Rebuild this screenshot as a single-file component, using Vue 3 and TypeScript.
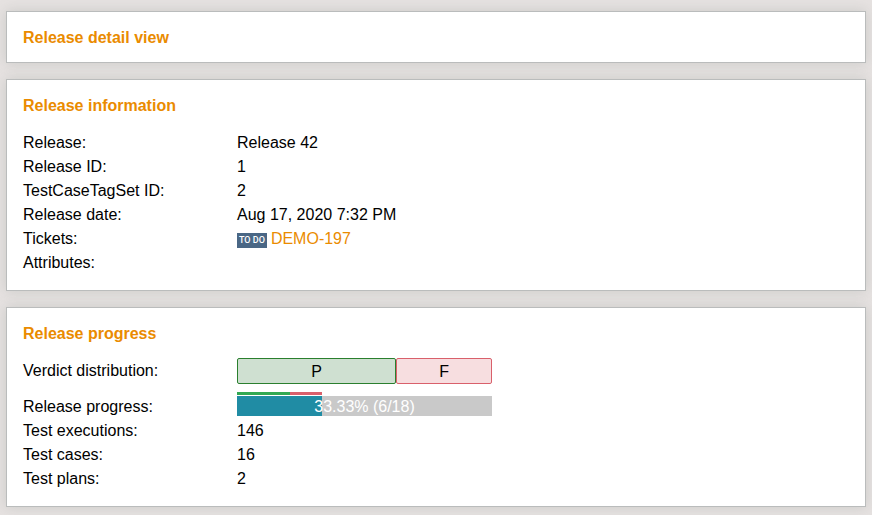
<script setup lang="ts">
interface Verdict {
  key: string
  label: string
  count: number
}

interface Field {
  label: string
  value: string | number
}

const releaseFields: Field[] = [
  { label: 'Release:', value: 'Release 42' },
  { label: 'Release ID:', value: 1 },
  { label: 'TestCaseTagSet ID:', value: 2 },
  { label: 'Release date:', value: 'Aug 17, 2020 7:32 PM' },
]

const ticket = { id: 'DEMO-197', status: 'TO DO' }

const verdicts: Verdict[] = [
  { key: 'pass', label: 'P', count: 10 },
  { key: 'fail', label: 'F', count: 6 },
]

const totals: Field[] = [
  { label: 'Test executions:', value: 146 },
  { label: 'Test cases:', value: 16 },
  { label: 'Test plans:', value: 2 },
]

const done = 6
const planned = 18
const percent = ((done / planned) * 100).toFixed(2)

const verdictTotal = verdicts.reduce((sum, v) => sum + v.count, 0)
const share = (v: Verdict): string => `${(v.count / verdictTotal) * 100}%`
</script>

<template>
  <main class="page">
    <header class="card">
      <h1 class="title">Release detail view</h1>
    </header>

    <section class="card">
      <h2 class="title">Release information</h2>
      <dl class="fields">
        <div v-for="field in releaseFields" :key="field.label" class="row">
          <dt>{{ field.label }}</dt>
          <dd>{{ field.value }}</dd>
        </div>
        <div class="row">
          <dt>Tickets:</dt>
          <dd class="ticket">
            <span class="status">{{ ticket.status }}</span>
            <a href="#" class="link">{{ ticket.id }}</a>
          </dd>
        </div>
        <div class="row">
          <dt>Attributes:</dt>
          <dd></dd>
        </div>
      </dl>
    </section>

    <section class="card">
      <h2 class="title">Release progress</h2>
      <dl class="fields">
        <div class="row row-verdicts">
          <dt>Verdict distribution:</dt>
          <dd>
            <div class="verdicts">
              <div
                v-for="v in verdicts"
                :key="v.key"
                class="verdict"
                :class="v.key"
                :style="{ width: share(v) }"
              >{{ v.label }}</div>
            </div>
          </dd>
        </div>
        <div class="row row-progress">
          <dt>Release progress:</dt>
          <dd>
            <div class="progress">
              <div class="split" :style="{ width: percent + '%' }">
                <div
                  v-for="v in verdicts"
                  :key="v.key"
                  class="part"
                  :class="v.key"
                  :style="{ width: share(v) }"
                ></div>
              </div>
              <div class="track">
                <div class="fill" :style="{ width: percent + '%' }"></div>
                <span class="caption">{{ percent }}% ({{ done }}/{{ planned }})</span>
              </div>
            </div>
          </dd>
        </div>
        <div v-for="field in totals" :key="field.label" class="row">
          <dt>{{ field.label }}</dt>
          <dd>{{ field.value }}</dd>
        </div>
      </dl>
    </section>
  </main>
</template>

<style>
body {
  background: #e6e2e1;
}
</style>

<style scoped>
.page {
  display: flex;
  flex-direction: column;
  gap: 16px;
  padding: 11px 6px 8px;
  font: 16px/26px "Liberation Sans", Arial, sans-serif;
  color: #000;
}

.card {
  padding: 13px 16px 11px;
  background: #fff;
  border: 1px solid #babcbc;
  box-shadow: 0 0 12px rgba(120, 130, 125, 0.25);
}

.title {
  margin: 0;
  font-size: 16px;
  line-height: 26px;
  font-weight: bold;
  color: #ea8b00;
}

.fields {
  margin: 11px 0 5px;
}

.row {
  display: grid;
  grid-template-columns: 214px minmax(0, 1fr);
  grid-template-rows: 24px;
}

dd {
  margin: 0;
}

.row-verdicts {
  grid-template-rows: 34px;
}

.row-progress {
  grid-template-rows: 26px;
}

.row-progress dt {
  padding-top: 2px;
}

.ticket {
  display: flex;
  align-items: flex-start;
  gap: 4px;
}

.status {
  margin-top: 7px;
  padding: 0 2px;
  background: #4a6785;
  color: #fff;
  font: 500 9px/15px Roboto, sans-serif;
}

.link {
  color: #ea8b00;
  text-decoration: none;
}

.verdicts {
  display: flex;
  max-width: 255px;
}

.verdict {
  box-sizing: border-box;
  height: 26px;
  border: 1px solid;
  border-radius: 2px;
  text-align: center;
}

.verdict.pass {
  background: #cfe0d1;
  border-color: #2a7f2e;
}

.verdict.fail {
  background: #f7dee0;
  border-color: #d9606b;
}

.progress {
  display: flex;
  flex-direction: column;
  gap: 1px;
  max-width: 255px;
}

.split {
  display: flex;
  height: 3px;
}

.part.pass {
  background: #32a852;
}

.part.fail {
  background: #d9606b;
}

.track {
  display: grid;
  grid-template-rows: 20px;
  background: #c9c9c9;
  line-height: 22px;
}

.fill,
.caption {
  grid-area: 1 / 1;
}

.fill {
  background: #208ca4;
}

.caption {
  color: #fff;
  text-align: center;
}
</style>
